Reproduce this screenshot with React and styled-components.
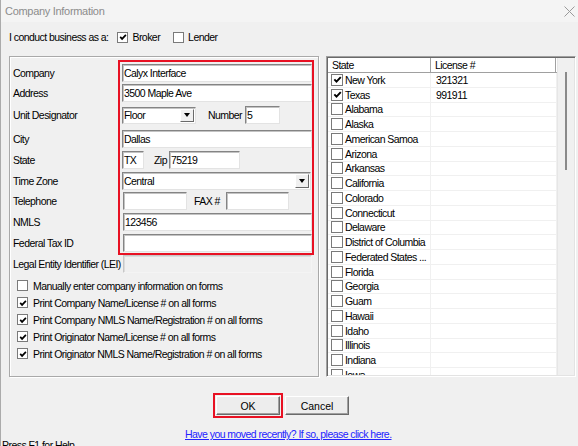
import React from 'react'
import styled, { createGlobalStyle } from 'styled-components'

const GlobalStyle = createGlobalStyle`
  html, body {
    margin: 0;
    padding: 0;
    background: #f0f0f0;
  }
  body {
    font-family: 'Liberation Sans', Arial, sans-serif;
    font-size: 10.5px;
    letter-spacing: -0.55px;
    color: #000;
  }
`

const Window = styled.div`
  box-sizing: border-box;
  width: 578px;
  height: 446px;
  overflow: hidden;
  background: #f0f0f0;
  border-left: 1px solid #ababab;
  display: flex;
  flex-direction: column;
`

const TitleBar = styled.div`
  flex: none;
  height: 22px;
  display: flex;
  align-items: center;
  justify-content: space-between;
  padding: 0 3px 0 4px;
  background: #f4f4f4;
  color: #8c8c8c;
  font-size: 11px;
  letter-spacing: -0.3px;
`

const Content = styled.div`
  padding: 0 0 0 8px;
`

const BusinessRow = styled.div`
  display: flex;
  align-items: center;
  height: 18px;
  margin-top: 6px;
`

const BusinessLabel = styled.span`
  margin-right: 9px;
`

const CheckLabel = styled.label`
  display: flex;
  align-items: center;
  gap: 4px;
  margin-right: ${p => p.$gap || 0}px;
`

const Box = styled.span`
  box-sizing: border-box;
  flex: none;
  display: inline-flex;
  align-items: center;
  justify-content: center;
  width: ${p => p.$size}px;
  height: ${p => p.$size}px;
  background: #fff;
  border: 1px solid #7a7a7a;
`

const Main = styled.div`
  display: flex;
  gap: 7px;
  margin-top: 10px;
  height: 321px;
`

const GroupBox = styled.div`
  box-sizing: border-box;
  width: 310px;
  height: 321px;
  border: 1px solid #a9a9a9;
  box-shadow: inset 1px 1px 0 #fff, 1px 1px 0 #fff;
  padding: 7px 3px 0 3px;
`

const Form = styled.div`
  position: relative;
  display: flex;
  flex-direction: column;
`

const Highlight = styled.div`
  position: absolute;
  top: -4px;
  left: 105px;
  width: 196px;
  height: 195px;
  box-sizing: border-box;
  border: 2px solid #e81123;
  pointer-events: none;
`

const FieldRow = styled.div`
  display: flex;
  align-items: flex-start;
  height: ${p => p.$h}px;
`

const Label = styled.div`
  flex: none;
  width: 109px;
  line-height: 18px;
  white-space: nowrap;
`

const Controls = styled.div`
  display: flex;
  align-items: center;
  height: 18px;
`

const InlineLabel = styled.span`
  margin: 0 ${p => p.$right || 3}px 0 ${p => p.$left}px;
  white-space: nowrap;
`

const Field = styled.div`
  box-sizing: border-box;
  flex: none;
  width: ${p => p.$w}px;
  height: ${p => p.$h || 18}px;
  margin-left: ${p => p.$shift || 0}px;
  background: ${p => (p.$disabled ? '#f0f0f0' : '#fff')};
  border: 1px solid;
  border-color: ${p => (p.$disabled ? '#c8c8c8 #f4f4f4 #f4f4f4 #c8c8c8' : '#848484 #e3e3e3 #e3e3e3 #848484')};
  box-shadow: inset 1px 1px 0 ${p => (p.$disabled ? '#dcdcdc' : '#c3c3c3')};
  padding-left: 1px;
  line-height: ${p => (p.$h || 18) - 2}px;
  white-space: nowrap;
  overflow: hidden;
`

const Select = styled(Field)`
  display: flex;
  justify-content: space-between;
  align-items: stretch;
  padding-right: 0;
`

const DropButton = styled.span`
  box-sizing: border-box;
  width: 14px;
  margin: 1px 1px 1px 0;
  background: #f0f0f0;
  border: 1px solid;
  border-color: #fff #6a6a6a #6a6a6a #fff;
  display: flex;
  align-items: center;
  justify-content: center;

  &::after {
    content: '';
    border-left: 3.5px solid transparent;
    border-right: 3.5px solid transparent;
    border-top: 4px solid #000;
  }
`

const Options = styled.div`
  display: flex;
  flex-direction: column;
  margin-top: 1px;
  padding-left: 4px;
`

const OptionRow = styled.label`
  display: flex;
  align-items: center;
  gap: 5px;
  height: 17px;
  white-space: nowrap;
`

const StateList = styled.div`
  box-sizing: border-box;
  width: 250px;
  height: 321px;
  border: 1px solid;
  border-color: #a0a0a0 #fff #fff #a0a0a0;
  box-shadow: inset 1px 1px 0 #696969, inset -1px -1px 0 #e3e3e3;
  padding: 1px;
  display: flex;
  overflow: hidden;
`

const Table = styled.div`
  width: 229px;
  flex: none;
  background: #fff;
  overflow: hidden;
`

const HeaderRow = styled.div`
  display: flex;
  height: 15px;
  box-sizing: border-box;
  background: #fff;
  border-bottom: 1px solid #a0a0a0;
`

const HeaderCell = styled.div`
  box-sizing: border-box;
  width: ${p => p.$w}px;
  padding-left: 4px;
  line-height: 14px;
  border-right: 1px solid #a0a0a0;
`

const Row = styled.div`
  display: flex;
  height: 14.75px;
  box-sizing: border-box;
  border-bottom: 1px solid #f0f0f0;
`

const Cell = styled.div`
  box-sizing: border-box;
  width: ${p => p.$w}px;
  display: flex;
  align-items: center;
  gap: 2px;
  padding-left: ${p => p.$pad}px;
  border-right: 1px solid #f0f0f0;
  white-space: nowrap;
  overflow: hidden;
`

const Scrollbar = styled.div`
  position: relative;
  flex: 1;
  background: #f0f0f0;
  border-left: 1px solid #e6e6e6;
`

const Thumb = styled.div`
  position: absolute;
  left: 7px;
  top: 14px;
  width: 2px;
  height: 98px;
  background: #8a8a8a;
`

const ButtonRow = styled.div`
  display: flex;
  align-items: center;
  gap: 2px;
  margin-top: 16px;
  padding-left: 212px;
`

const Frame = styled.span`
  display: inline-flex;
  padding: 1px;
  border: 2px solid #e81123;
`

const Button = styled.button`
  box-sizing: border-box;
  width: ${p => p.$w}px;
  height: 19px;
  padding: 0;
  font: inherit;
  color: #000;
  background: #ededed;
  border: 1px solid;
  border-color: #fff #6a6a6a #6a6a6a #fff;
  box-shadow: inset -1px -1px 0 #a0a0a0;
`

const LinkRow = styled.div`
  height: 10px;
  line-height: 10px;
  margin-top: 11px;
  padding-left: 184px;
`

const Link = styled.a`
  color: #2323ff;
  text-decoration: underline;
`

const StatusBar = styled.div`
  line-height: 12px;
  padding-left: 1px;
  white-space: nowrap;
`

const Check = ({ on, size = 11 }) => (
  <Box $size={size}>
    {on && (
      <svg width={size - 3} height={size - 3} viewBox="0 0 8 8">
        <path d="M1.2 3.9 L3.1 5.9 L6.9 1.9" fill="none" stroke="#000" strokeWidth="1.7" />
      </svg>
    )}
  </Box>
)

const states = [
  ['New York', '321321', true],
  ['Texas', '991911', true],
  ['Alabama'],
  ['Alaska'],
  ['American Samoa'],
  ['Arizona'],
  ['Arkansas'],
  ['California'],
  ['Colorado'],
  ['Connecticut'],
  ['Delaware'],
  ['District of Columbia'],
  ['Federated States ...'],
  ['Florida'],
  ['Georgia'],
  ['Guam'],
  ['Hawaii'],
  ['Idaho'],
  ['Illinois'],
  ['Indiana'],
  ['Iowa'],
]

const options = [
  ['Manually enter company information on forms', false],
  ['Print Company Name/License # on all forms', true],
  ['Print Company NMLS Name/Registration # on all forms', true],
  ['Print Originator Name/License # on all forms', true],
  ['Print Originator NMLS Name/Registration # on all forms', true],
]

export default function App() {
  return (
    <>
      <GlobalStyle />
      <Window>
        <TitleBar>
          <span>Company Information</span>
          <svg width="11" height="11" viewBox="0 0 11 11">
            <path d="M0.5 0.5 L10.5 10.5 M10.5 0.5 L0.5 10.5" stroke="#9a9a9a" strokeWidth="1" />
          </svg>
        </TitleBar>
        <Content>
          <BusinessRow>
            <BusinessLabel>I conduct business as a:</BusinessLabel>
            <CheckLabel $gap={13}>
              <Check on />
              Broker
            </CheckLabel>
            <CheckLabel>
              <Check />
              Lender
            </CheckLabel>
          </BusinessRow>
          <Main>
            <GroupBox>
              <Form>
                <Highlight />
                <FieldRow $h={20}>
                  <Label>Company</Label>
                  <Field $w={190}>Calyx Interface</Field>
                </FieldRow>
                <FieldRow $h={22}>
                  <Label>Address</Label>
                  <Field $w={190}>3500 Maple Ave</Field>
                </FieldRow>
                <FieldRow $h={24}>
                  <Label>Unit Designator</Label>
                  <Controls>
                    <Select $w={74} $h={17}>
                      Floor
                      <DropButton />
                    </Select>
                    <InlineLabel $left={12}>Number</InlineLabel>
                    <Field $w={35}>5</Field>
                  </Controls>
                </FieldRow>
                <FieldRow $h={21}>
                  <Label>City</Label>
                  <Field $w={190}>Dallas</Field>
                </FieldRow>
                <FieldRow $h={21}>
                  <Label>State</Label>
                  <Controls>
                    <Field $w={22}>TX</Field>
                    <InlineLabel $left={10} $right={2}>Zip</InlineLabel>
                    <Field $w={71}>75219</Field>
                  </Controls>
                </FieldRow>
                <FieldRow $h={20}>
                  <Label>Time Zone</Label>
                  <Select $w={189}>
                    Central
                    <DropButton />
                  </Select>
                </FieldRow>
                <FieldRow $h={21}>
                  <Label>Telephone</Label>
                  <Controls>
                    <Field $w={64} $shift={1} />
                    <InlineLabel $left={7} $right={6}>FAX #</InlineLabel>
                    <Field $w={63} />
                  </Controls>
                </FieldRow>
                <FieldRow $h={21}>
                  <Label>NMLS</Label>
                  <Field $w={189} $shift={1}>123456</Field>
                </FieldRow>
                <FieldRow $h={21}>
                  <Label>Federal Tax ID</Label>
                  <Field $w={189} $shift={1} />
                </FieldRow>
                <FieldRow $h={21}>
                  <Label>Legal Entity Identifier (LEI)</Label>
                  <Field $w={189} $shift={1} $disabled />
                </FieldRow>
              </Form>
              <Options>
                {options.map(([text, on]) => (
                  <OptionRow key={text}>
                    <Check on={on} />
                    {text}
                  </OptionRow>
                ))}
              </Options>
            </GroupBox>
            <StateList>
              <Table>
                <HeaderRow>
                  <HeaderCell $w={103}>State</HeaderCell>
                  <HeaderCell $w={125}>License #</HeaderCell>
                </HeaderRow>
                {states.map(([name, license, on]) => (
                  <Row key={name}>
                    <Cell $w={103} $pad={3}>
                      <Check on={on} size={12} />
                      {name}
                    </Cell>
                    <Cell $w={126} $pad={5}>{license}</Cell>
                  </Row>
                ))}
              </Table>
              <Scrollbar>
                <Thumb />
              </Scrollbar>
            </StateList>
          </Main>
        </Content>
        <ButtonRow>
          <Frame>
            <Button $w={64}>OK</Button>
          </Frame>
          <Button $w={64}>Cancel</Button>
        </ButtonRow>
        <LinkRow>
          <Link href="#">Have you moved recently? If so, please click here.</Link>
        </LinkRow>
        <StatusBar>Press F1 for Help</StatusBar>
      </Window>
    </>
  )
}
